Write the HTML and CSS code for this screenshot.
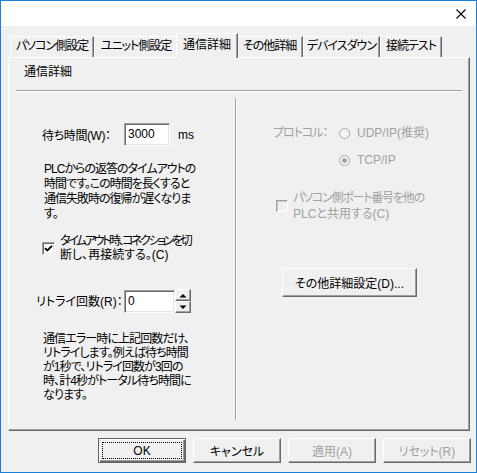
FILE: index.html
```html
<!DOCTYPE html>
<html lang="ja">
<head>
    <meta charset="UTF-8">
    <meta name="viewport" content="width=device-width, initial-scale=1.0">
    <title>通信詳細</title>
    <link rel="stylesheet" href="styles.css">
</head>
<body>
    <div class="window">
        <div class="titlebar">
            <svg class="close" width="10" height="10" viewBox="0 0 10 10"><path d="M0.5 0.5L9.5 9.5M9.5 0.5L0.5 9.5" stroke="#000" stroke-width="1.1" fill="none"/></svg>
        </div>

        <div class="tabs">
            <div class="tab tab-pc">パソコン側設定</div>
            <div class="tab tab-unit">ユニット側設定</div>
            <div class="tab tab-active">通信詳細</div>
            <div class="tab tab-other">その他詳細</div>
            <div class="tab tab-down">デバイスダウン</div>
            <div class="tab tab-test">接続テスト</div>
        </div>

        <div class="panel">
            <div class="panel-title">通信詳細</div>
            <div class="rule"></div>

            <div class="panel-body">
                <div class="col-left">
                    <div class="field wait-row">
                        <span class="field-label wait-label">待ち時間(W)：</span>
                        <div class="textbox wait-box">3000</div>
                        <span class="unit">ms</span>
                    </div>
                    <p class="note note-wait">PLCからの返答のタイムアウトの<br>時間です。この時間を長くすると<br>通信失敗時の復帰が遅くなりま<br>す。</p>

                    <div class="check-row reconnect">
                        <span class="checkbox">
                            <svg width="11" height="11" viewBox="0 0 11 11"><path d="M2 5.2L4.3 7.5L9 2.8" stroke="#000" stroke-width="1.9" fill="none"/></svg>
                        </span>
                        <span class="check-label"><span class="squeeze">タイムアウト時、コネクションを切</span><br>断し、再接続する。(C)</span>
                    </div>

                    <div class="field retry-row">
                        <span class="field-label retry-label">リトライ回数(R)：</span>
                        <div class="textbox retry-box">0</div>
                        <div class="spin">
                            <span class="spin-btn"><svg width="8" height="5" viewBox="0 0 8 5"><path d="M0.5 4.5L4 1L7.5 4.5Z" fill="#000"/></svg></span>
                            <span class="spin-btn"><svg width="8" height="5" viewBox="0 0 8 5"><path d="M0.5 0.5L4 4L7.5 0.5Z" fill="#000"/></svg></span>
                        </div>
                    </div>
                    <p class="note note-retry">通信エラー時に上記回数だけ、<br>リトライします。例えば待ち時間<br>が1秒で、リトライ回数が3回の<br>時、計4秒がトータル待ち時間に<br>なります。</p>
                </div>

                <div class="col-right">
                    <div class="proto-row">
                        <span class="proto-label">プロトコル：</span>
                        <span class="radio"></span>
                        <span>UDP/IP(推奨)</span>
                    </div>
                    <div class="proto-row tcp-row">
                        <span class="radio radio-on"></span>
                        <span>TCP/IP</span>
                    </div>
                    <div class="check-row share-row">
                        <span class="checkbox checkbox-off"></span>
                        <span class="check-label"><span class="squeeze-lite">パソコン側ポート番号を他の</span><br>PLCと共用する(C)</span>
                    </div>
                    <div class="btn btn-detail">その他詳細設定(D)...</div>
                </div>
            </div>
        </div>

        <div class="actions">
            <div class="btn btn-default"><span class="focus">OK</span></div>
            <div class="btn">キャンセル</div>
            <div class="btn btn-disabled">適用(A)</div>
            <div class="btn btn-disabled">リセット(R)</div>
        </div>
    </div>
</body>
</html>
```

FILE: styles.css
```css
* {
    box-sizing: border-box;
}

body {
    margin: 0;
    font-family: "Liberation Sans", "Noto Sans CJK JP", sans-serif;
    font-size: 12px;
    font-feature-settings: "palt";
    color: #000;
    background: #fff;
}

.window {
    width: 477px;
    height: 473px;
    border: 1px solid #1a7fd6;
    background: #f0f0f0;
    display: flex;
    flex-direction: column;
}

.titlebar {
    height: 25px;
    background: #fff;
    display: flex;
    justify-content: flex-end;
    align-items: center;
    padding-right: 10px;
}

/* tabs */

.tabs {
    display: flex;
    align-items: flex-end;
    padding: 7px 0 0 9px;
    margin-bottom: -1px;
}

.tab {
    height: 21px;
    margin-bottom: 1px;
    line-height: 19px;
    text-align: center;
    white-space: nowrap;
    letter-spacing: -1px;
    background: #f0f0f0;
    border-top: 1px solid #fff;
    border-left: 1px solid #fff;
    border-right: 1px solid #696969;
    box-shadow: inset -1px 0 0 #a0a0a0;
}

.tab-pc { width: 84px; }
.tab-unit { width: 84px; }
.tab-other { width: 67px; }
.tab-down { width: 77px; }
.tab-test { width: 62px; }

.tab-active {
    width: 62px;
    height: 25px;
    margin: 0 -2px;
    line-height: 23px;
    letter-spacing: 0;
    position: relative;
    z-index: 1;
}

/* panel */

.panel {
    height: 374px;
    margin: 0 6px 0 7px;
    border-top: 1px solid #fff;
    border-left: 1px solid #fff;
    border-right: 1px solid #696969;
    border-bottom: 1px solid #696969;
    box-shadow: inset -1px -1px 0 #a0a0a0;
}

.panel-title {
    margin-top: 7px;
    padding-left: 15px;
    line-height: 15px;
}

.rule {
    height: 2px;
    margin: 10px 7px 0 7px;
    border-top: 1px solid #a0a0a0;
    border-bottom: 1px solid #fff;
}

.panel-body {
    display: flex;
    height: 322px;
    margin-top: 6px;
}

.col-left {
    width: 226px;
}

.col-right {
    flex: 1;
    border-left: 1px solid #a0a0a0;
    box-shadow: inset 1px 0 0 #fff;
    color: #a0a0a0;
}

.field {
    display: flex;
    white-space: nowrap;
}

.wait-row {
    align-items: center;
    height: 23px;
    margin-top: 25px;
    padding-left: 33px;
}

.wait-label {
    width: 82px;
    letter-spacing: -0.4px;
}

.textbox {
    height: 23px;
    padding-left: 3px;
    line-height: 21px;
    background: #fff;
    border: 1px solid;
    border-color: #a0a0a0 #fff #fff #a0a0a0;
    box-shadow: inset 1px 1px 0 #696969, inset -1px -1px 0 #e3e3e3;
}

.wait-box { width: 46px; }

.unit {
    margin-left: 8px;
}

.note {
    margin: 0;
    white-space: nowrap;
}

.note-wait {
    margin: 16px 0 0 35px;
    line-height: 15px;
    letter-spacing: -1px;
}

.note-retry {
    margin: 19px 0 0 34px;
    line-height: 14px;
    letter-spacing: -0.9px;
}

.check-row {
    display: flex;
    align-items: center;
    white-space: nowrap;
}

.reconnect {
    margin-top: 12px;
    padding-left: 33px;
    line-height: 14px;
}

.squeeze {
    letter-spacing: -2.4px;
}

.squeeze-lite {
    letter-spacing: -1.2px;
}

.checkbox {
    width: 13px;
    height: 13px;
    display: flex;
    align-items: center;
    justify-content: center;
    background: #fff;
    border: 1px solid;
    border-color: #a0a0a0 #fff #fff #a0a0a0;
    box-shadow: inset 1px 1px 0 #696969, inset -1px -1px 0 #e3e3e3;
}

.check-label {
    margin-left: 5px;
}

.retry-row {
    align-items: flex-end;
    height: 24px;
    margin-top: 27px;
    padding-left: 27px;
}

.retry-label {
    width: 88px;
    line-height: 21px;
}

.retry-box { width: 51px; }

.spin {
    width: 16px;
    height: 24px;
    display: flex;
    flex-direction: column;
}

.spin-btn {
    height: 12px;
    display: flex;
    align-items: center;
    justify-content: center;
    background: #f0f0f0;
    border: 1px solid;
    border-color: #fff #696969 #696969 #fff;
    box-shadow: inset -1px -1px 0 #a0a0a0;
}

/* right column, disabled */

.proto-row {
    display: flex;
    align-items: center;
    margin-top: 28px;
    padding-left: 37px;
    line-height: 15px;
    white-space: nowrap;
}

.proto-label {
    width: 66px;
    letter-spacing: -1px;
}

.radio {
    width: 11px;
    height: 11px;
    margin-right: 7px;
    border-radius: 50%;
    border: 1px solid #a8a8a8;
    background: #f4f4f4;
}

.radio-on {
    background: radial-gradient(circle, #a0a0a0 0 2px, #f4f4f4 2.6px);
}

.tcp-row {
    margin-top: 12px;
    padding-left: 103px;
}

.share-row {
    margin-top: 22px;
    padding-left: 40px;
    line-height: 16px;
}

.checkbox-off {
    width: 12px;
    height: 12px;
    background: #f0f0f0;
    border-color: #a0a0a0 #fff #fff #a0a0a0;
    box-shadow: inset 1px 1px 0 #c8c8c8;
}

/* buttons */

.btn {
    width: 88px;
    height: 25px;
    display: flex;
    align-items: center;
    justify-content: center;
    white-space: nowrap;
    color: #000;
    background: #f0f0f0;
    border: 1px solid;
    border-color: #fff #696969 #696969 #fff;
    box-shadow: inset -1px -1px 0 #a0a0a0;
}

.btn-detail {
    width: 135px;
    height: 29px;
    margin: 46px 0 0 46px;
}

.btn-disabled {
    color: #a0a0a0;
}

.btn-default {
    border: 1px solid #646464;
    box-shadow: inset 1px 1px 0 #fff, inset -1px -1px 0 #696969, inset -2px -2px 0 #a0a0a0;
    padding: 3px;
}

.focus {
    flex: 1;
    align-self: stretch;
    display: flex;
    align-items: center;
    justify-content: center;
    border: 1px dotted #000;
}

.actions {
    display: flex;
    gap: 7px;
    margin-top: 7px;
    padding-left: 97px;
}
```
